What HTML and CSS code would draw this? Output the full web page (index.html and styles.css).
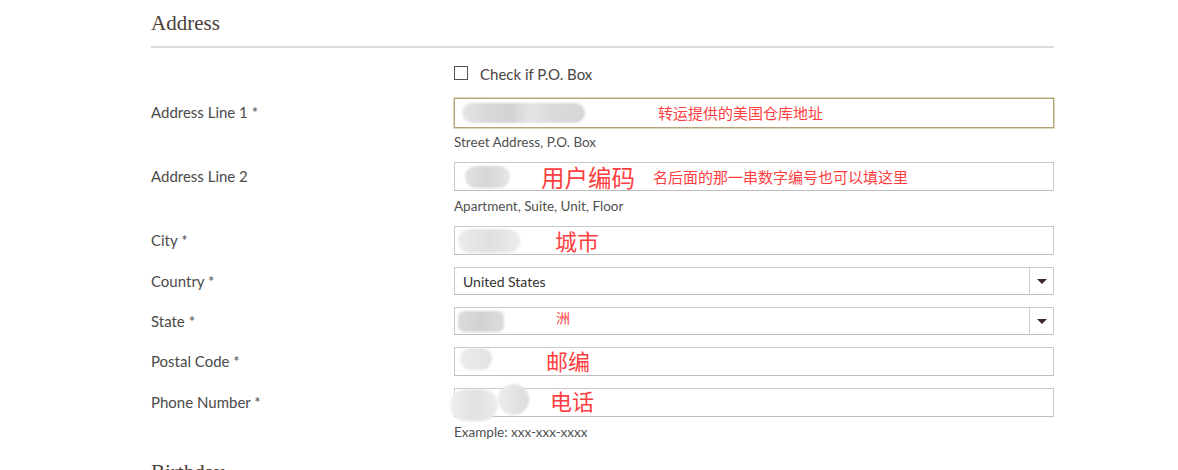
FILE: index.html
```html
<!DOCTYPE html>
<html lang="en">
<head>
<meta charset="utf-8">
<title>Address</title>
<link rel="stylesheet" href="styles.css">
</head>
<body>
<div class="page">
  <h2 class="section-title">Address</h2>
  <div class="checkbox-row">
    <span class="checkbox"></span>
    <span class="checkbox-label">Check if P.O. Box</span>
  </div>
  <div class="rows">
    <div class="row">
      <div class="label">Address Line 1 *</div>
      <div class="control">
        <div class="field field-focus">
          <span class="blob blob-a1"></span>
          <span class="note note-small note-a1">转运提供的美国仓库地址</span>
        </div>
        <div class="help help-a1">Street Address, P.O. Box</div>
      </div>
    </div>
    <div class="row">
      <div class="label">Address Line 2</div>
      <div class="control">
        <div class="field">
          <span class="blob blob-a2"></span>
          <span class="note note-big note-a2">用户编码</span>
          <span class="note note-small note-a2b">名后面的那一串数字编号也可以填这里</span>
        </div>
        <div class="help">Apartment, Suite, Unit, Floor</div>
      </div>
    </div>
    <div class="row">
      <div class="label">City *</div>
      <div class="control">
        <div class="field">
          <span class="blob blob-city"></span>
          <span class="note note-big note-city">城市</span>
        </div>
      </div>
    </div>
    <div class="row">
      <div class="label label-select">Country *</div>
      <div class="control">
        <div class="field select">
          <span class="select-value">United States</span>
          <span class="select-arrow"></span>
        </div>
      </div>
    </div>
    <div class="row">
      <div class="label label-select">State *</div>
      <div class="control">
        <div class="field select">
          <span class="select-value">
            <span class="blob blob-state"></span>
            <span class="note note-state">洲</span>
          </span>
          <span class="select-arrow"></span>
        </div>
      </div>
    </div>
    <div class="row">
      <div class="label">Postal Code *</div>
      <div class="control">
        <div class="field">
          <span class="blob blob-postal"></span>
          <span class="note note-big note-postal">邮编</span>
        </div>
      </div>
    </div>
    <div class="row">
      <div class="label">Phone Number *</div>
      <div class="control">
        <div class="field">
          <span class="blob blob-phone1"></span>
          <span class="blob blob-phone2"></span>
          <span class="note note-big note-phone">电话</span>
        </div>
        <div class="help">Example: xxx-xxx-xxxx</div>
      </div>
    </div>
  </div>
  <h2 class="section-title section-next">Birthday</h2>
</div>
</body>
</html>
```

FILE: styles.css
```css
html, body {
  margin: 0;
  padding: 0;
  background: #ffffff;
}

body {
  font-family: "Lato", "Liberation Sans", sans-serif;
  color: #4a4a4a;
  overflow: hidden;
}

.page {
  width: 903px;
  margin-left: 151px;
}

.section-title {
  margin: 0;
  padding-top: 10px;
  height: 36px;
  font-family: "Liberation Serif", "Times New Roman", serif;
  font-weight: normal;
  font-size: 21px;
  line-height: 26px;
  color: #4b3d38;
  border-bottom: 2px solid #dedada;
  box-sizing: content-box;
}

.section-next {
  border-bottom: none;
  margin-top: 9px;
}

.checkbox-row {
  display: flex;
  align-items: center;
  margin-top: 16px;
  margin-left: 303px;
  height: 20px;
}

.checkbox {
  width: 12px;
  height: 12px;
  border: 1px solid #5a5050;
  margin-top: -3px;
}

.checkbox-label {
  margin-left: 12px;
  font-size: 15px;
  color: #4a4444;
}

.rows {
  margin-top: 14px;
  display: flex;
  flex-direction: column;
  gap: 12px;
}

.row {
  display: grid;
  grid-template-columns: 303px 600px;
}

.label {
  font-size: 15px;
  line-height: 28px;
  color: #4a4a4a;
}

.label-select {
  line-height: 28px;
}

.field {
  height: 29px;
  box-sizing: border-box;
  border: 1px solid #c9c9c9;
  border-bottom-color: #bdbdbd;
  background: #fff;
  display: flex;
  align-items: center;
  font-size: 14px;
  color: #333;
}

.field-focus {
  height: 30px;
  border: 1px solid #b3a279;
  box-shadow: 0 0 0 1px #e3d9bf;
}

.select {
  height: 28px;
}

.select-value {
  flex: 1;
  display: flex;
  align-items: center;
  padding-left: 8px;
}

.select-arrow {
  width: 23px;
  height: 100%;
  border-left: 1px solid #cfcfcf;
  display: flex;
  align-items: center;
  justify-content: center;
}

.select-arrow::before {
  content: "";
  width: 0;
  height: 0;
  border-left: 5px solid transparent;
  border-right: 5px solid transparent;
  border-top: 5px solid #3d2c28;
}

.help {
  margin-top: 7px;
  font-size: 13.5px;
  line-height: 16px;
  color: #505050;
}

.help-a1 {
  margin-top: 6px;
}

.blob {
  display: inline-block;
  flex: none;
  border-radius: 12px;
  filter: blur(1px);
  background: linear-gradient(90deg, #e6e6e6 0%, #d8d8d8 20%, #d2d2d2 40%, #e4e4e4 55%, #dadada 75%, #d6d6d6 100%);
}

.blob-a1 {
  width: 123px;
  height: 20px;
  margin-left: 7px;
}

.blob-a2 {
  width: 45px;
  height: 22px;
  margin-left: 10px;
  background: linear-gradient(90deg, #e2e2e2, #d6d6d6 50%, #e6e6e6);
}

.blob-city {
  width: 62px;
  height: 24px;
  margin-left: 3px;
  background: linear-gradient(90deg, #ececec, #e0e0e0 50%, #ebebeb);
}

.blob-state {
  width: 46px;
  height: 21px;
  margin-left: -5px;
  border-radius: 6px;
  background: linear-gradient(90deg, #dcdcdc, #d2d2d2 50%, #dcdcdc);
}

.blob-postal {
  width: 32px;
  height: 22px;
  margin-left: 5px;
  margin-top: -6px;
  background: linear-gradient(90deg, #ececec, #e2e2e2);
}

.blob-phone1 {
  width: 48px;
  height: 32px;
  margin-left: -5px;
  margin-top: 4px;
  border-radius: 16px;
  background: linear-gradient(90deg, #f0f0f0, #e2e2e2 50%, #ebebeb);
}

.blob-phone2 {
  width: 31px;
  height: 31px;
  margin-top: -6px;
  border-radius: 16px;
  background: linear-gradient(90deg, #ececec, #dcdcdc);
}

.note {
  color: #ff3f3f;
  font-family: "Noto Sans CJK SC", sans-serif;
  white-space: nowrap;
}

.note-small {
  font-size: 15px;
  line-height: 18px;
}

.note-big {
  font-size: 22px;
  line-height: 26px;
}

.note-a1 {
  margin-left: 73px;
}

.note-a2 {
  font-size: 23.5px;
  margin-left: 31px;
}

.note-a2b {
  margin-left: 18px;
}

.note-city {
  margin-left: 35px;
  margin-top: -2px;
}

.note-state {
  font-size: 14px;
  line-height: 16px;
  margin-left: 52px;
  margin-top: -8px;
}

.note-postal {
  margin-left: 54px;
  margin-top: -4px;
}

.note-phone {
  margin-left: 21px;
  margin-top: -5px;
}
```
